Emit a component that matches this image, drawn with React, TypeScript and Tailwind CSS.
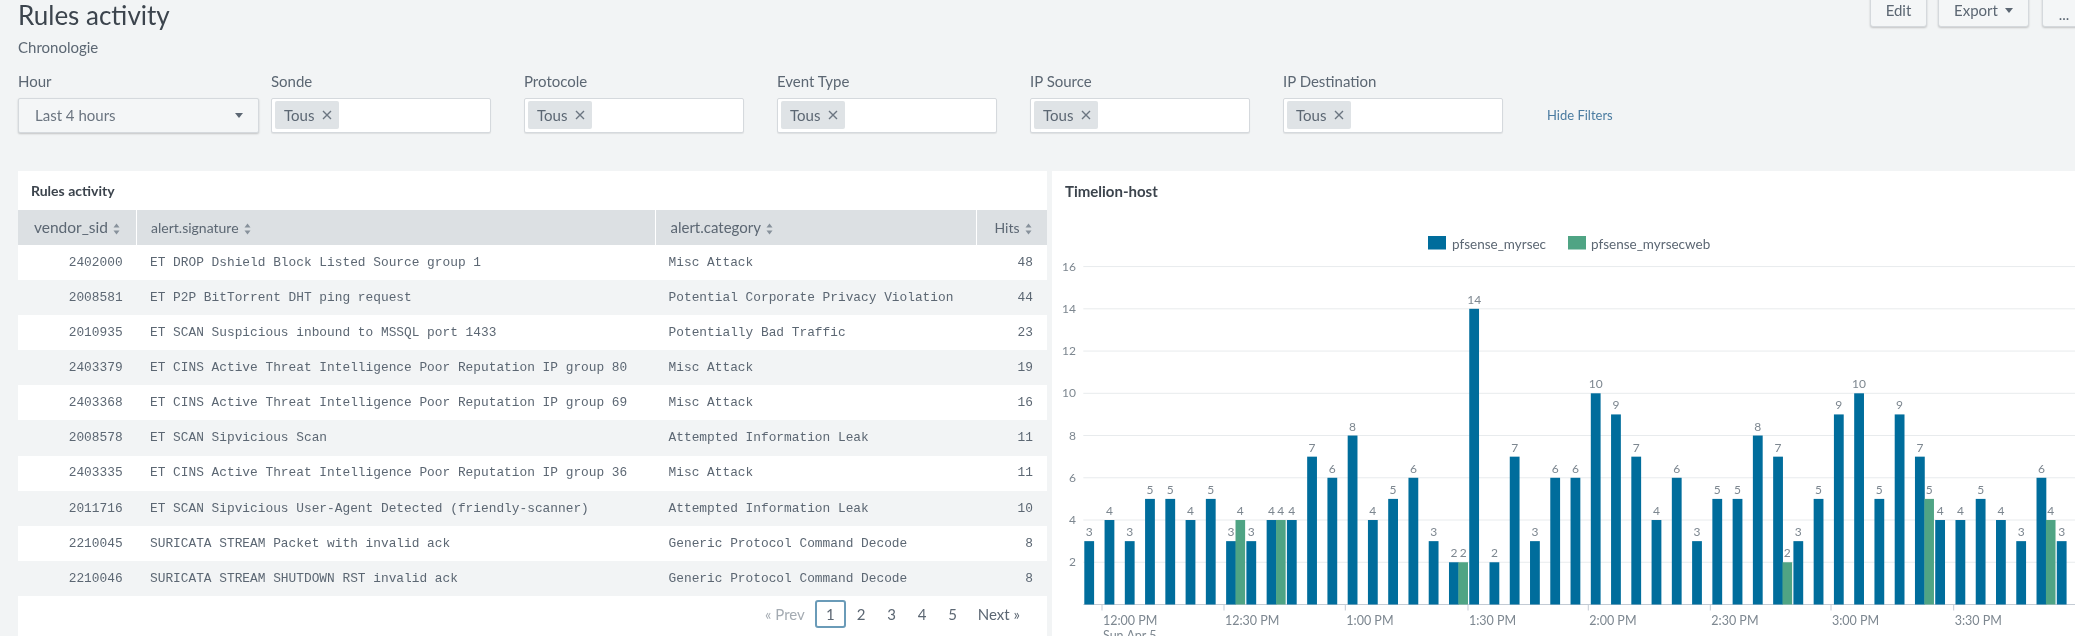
import React from "react";

const rows: [string, string, string, number][] = [
  ["2402000", "ET DROP Dshield Block Listed Source group 1", "Misc Attack", 48],
  ["2008581", "ET P2P BitTorrent DHT ping request", "Potential Corporate Privacy Violation", 44],
  ["2010935", "ET SCAN Suspicious inbound to MSSQL port 1433", "Potentially Bad Traffic", 23],
  ["2403379", "ET CINS Active Threat Intelligence Poor Reputation IP group 80", "Misc Attack", 19],
  ["2403368", "ET CINS Active Threat Intelligence Poor Reputation IP group 69", "Misc Attack", 16],
  ["2008578", "ET SCAN Sipvicious Scan", "Attempted Information Leak", 11],
  ["2403335", "ET CINS Active Threat Intelligence Poor Reputation IP group 36", "Misc Attack", 11],
  ["2011716", "ET SCAN Sipvicious User-Agent Detected (friendly-scanner)", "Attempted Information Leak", 10],
  ["2210045", "SURICATA STREAM Packet with invalid ack", "Generic Protocol Command Decode", 8],
  ["2210046", "SURICATA STREAM SHUTDOWN RST invalid ack", "Generic Protocol Command Decode", 8],
];

const blue = [3,4,3,5,5,4,5,3,3,4,4,7,6,8,4,5,6,3,2,14,2,7,3,6,6,10,9,7,4,6,3,5,5,8,7,3,5,9,10,5,9,7,4,4,5,4,3,6,3];
const green: Record<number, number> = { 7: 4, 9: 4, 18: 2, 34: 2, 41: 5, 47: 4 };
const X0 = 1084.3;
const STEP = 20.26;
const BASE = 604.5;
const UNIT = 21.12;
const ticks: [number, string][] = [
  [1102, "12:00 PM"], [1224, "12:30 PM"], [1345.3, "1:00 PM"], [1468, "1:30 PM"],
  [1588.3, "2:00 PM"], [1710.3, "2:30 PM"], [1831, "3:00 PM"], [1953.7, "3:30 PM"],
];

function SortIcon() {
  return (
    <svg width="7" height="12" viewBox="0 0 7 12" className="ml-[5px] inline-block">
      <path d="M3.5 0.5 L6.5 4.5 H0.5 Z M3.5 11.5 L0.5 7.5 H6.5 Z" fill="#87919b" />
    </svg>
  );
}

function MultiSelect({ label }: { label: string }) {
  return (
    <div className="w-[253px] shrink-0">
      <div className="h-[16px] text-[15px] leading-[16px] text-[#5c6773]">{label}</div>
      <div className="mt-[9px] flex h-[34.5px] w-[220px] items-center rounded-[2px] border border-[#d5d9dd] bg-white pl-[3px] shadow-[0_1px_1px_rgba(0,0,0,0.08)]">
        <span className="flex h-[28px] w-[64px] items-center justify-between rounded-[2px] bg-[#dfe3e6] pl-[9px] pr-[7px] text-[15px] text-[#5c6773]">
          Tous
          <svg width="10" height="10" viewBox="0 0 10 10">
            <path d="M1 1 L9 9 M9 1 L1 9" stroke="#6b7580" strokeWidth="1.4" />
          </svg>
        </span>
      </div>
    </div>
  );
}

function Btn({ w, children }: { w: string; children: React.ReactNode }) {
  return (
    <div className={`${w} flex h-[33px] items-center justify-center gap-[7px] rounded-[3px] border border-[#d5d9dd] bg-[#f4f6f7] text-[15px] text-[#5c6773] shadow-[0_1px_2px_rgba(0,0,0,0.2)]`}>
      {children}
    </div>
  );
}

export default function App() {
  return (
    <div className="h-[636px] w-[2075px] overflow-hidden bg-[#f2f4f5] pl-[18px] font-['Lato',sans-serif] blur-[0.4px]">
      <div className="flex h-[30px] items-start justify-between">
        <h1 className="text-[26px] leading-[30px] text-[#3c444d]">Rules activity</h1>
        <div className="-mr-[11px] -mt-[6px] flex gap-[11px]">
          <Btn w="w-[57px]">Edit</Btn>
          <Btn w="w-[91px]">
            Export
            <svg width="8" height="5" viewBox="0 0 8 5"><path d="M0 0 H8 L4 5 Z" fill="#5c6773" /></svg>
          </Btn>
          <div className="ml-[2px]">
            <Btn w="w-[44px]"><span className="pt-[8px]">...</span></Btn>
          </div>
        </div>
      </div>
      <div className="mt-[9px] h-[16px] text-[15px] leading-[16px] text-[#5c6773]">Chronologie</div>
      <div className="mt-[18px] flex">
        <div className="w-[253px] shrink-0">
          <div className="h-[16px] text-[15px] leading-[16px] text-[#5c6773]">Hour</div>
          <div className="mt-[9px] flex h-[34.5px] w-[241px] items-center justify-between rounded-[2px] border border-[#d5d9dd] bg-[#f4f6f7] pl-[16px] pr-[15px] text-[15px] text-[#6b7580] shadow-[0_1px_2px_rgba(0,0,0,0.2)]">
            Last 4 hours
            <svg width="8" height="5" viewBox="0 0 8 5"><path d="M0 0 H8 L4 5 Z" fill="#5c6773" /></svg>
          </div>
        </div>
        <MultiSelect label="Sonde" />
        <MultiSelect label="Protocole" />
        <MultiSelect label="Event Type" />
        <MultiSelect label="IP Source" />
        <MultiSelect label="IP Destination" />
        <div className="ml-[11px] mt-[34px] text-[13px] leading-[16px] text-[#4a7ba0]">Hide Filters</div>
      </div>

      <div className="mt-[38.5px] flex h-[465px] gap-[5px]">
        <div className="w-[1029px] shrink-0 bg-white">
          <div className="flex h-[39px] items-center pl-[13px] text-[14px] font-bold text-[#3c444d]">Rules activity</div>
          <table className="w-full table-fixed border-collapse">
            <colgroup>
              <col className="w-[118.6px]" />
              <col className="w-[519.4px]" />
              <col className="w-[321px]" />
              <col className="w-[70px]" />
            </colgroup>
            <thead>
              <tr className="h-[35px] bg-[#dce0e3] text-left text-[#5c6773]">
                <th className="whitespace-nowrap border-r border-white pl-[16px] text-[15.5px] font-normal">vendor_sid<SortIcon /></th>
                <th className="border-r border-white pl-[14px] text-[14px] font-normal">alert.signature<SortIcon /></th>
                <th className="border-r border-white pl-[14px] text-[15px] font-normal">alert.category<SortIcon /></th>
                <th className="pl-[17px] text-[14px] font-normal">Hits<SortIcon /></th>
              </tr>
            </thead>
            <tbody className="font-['Liberation_Mono',monospace] text-[12.83px] text-[#5c6773]">
              {rows.map((r, i) => (
                <tr key={r[0]} className={`h-[35.1px] ${i % 2 ? "bg-[#f2f4f5]" : "bg-white"}`}>
                  <td className="pr-[14px] text-right">{r[0]}</td>
                  <td className="whitespace-nowrap pl-[13.4px]">{r[1]}</td>
                  <td className="whitespace-nowrap pl-[12.6px]">{r[2]}</td>
                  <td className="pr-[14px] text-right">{r[3]}</td>
                </tr>
              ))}
            </tbody>
          </table>
          <div className="mt-[4px] flex h-[28px] items-center justify-end pr-[27px] text-[15px] text-[#5c6773]">
            <span className="mr-[10px] text-[#a4abb2]">« Prev</span>
            <span className="flex h-[28px] w-[31px] items-center justify-center rounded-[3px] border-2 border-[#6a9bb8]">1</span>
            <span className="w-[30.5px] text-center">2</span>
            <span className="w-[30.5px] text-center">3</span>
            <span className="w-[30.5px] text-center">4</span>
            <span className="w-[30.5px] text-center">5</span>
            <span className="ml-[10px]">Next »</span>
          </div>
        </div>
        <div className="min-w-0 flex-1 bg-white">
          <div className="flex h-[41px] items-center pl-[13px] text-[15px] font-bold text-[#3c444d]">Timelion-host</div>
          <svg width="1023" height="424" viewBox="1052 212 1023 424" className="block">
            <rect x="1428" y="236" width="18" height="13.5" fill="#006d9c" />
            <text x="1452" y="249" fontSize="13.5" fill="#5c6773">pfsense_myrsec</text>
            <rect x="1568" y="236" width="18" height="13.5" fill="#4fa484" />
            <text x="1591" y="249" fontSize="13.5" fill="#5c6773">pfsense_myrsecweb</text>
            {[2, 4, 6, 8, 10, 12, 14, 16].map((v) => (
              <g key={v}>
                <line x1="1083.3" x2="2075" y1={BASE - v * UNIT} y2={BASE - v * UNIT} stroke="#e8ebed" />
                <text x="1076" y={BASE - v * UNIT + 4} textAnchor="end" fontSize="12" fill="#7d8790">{v}</text>
              </g>
            ))}
            <line x1="1083.3" x2="2075" y1={BASE} y2={BASE} stroke="#c3cbd4" />
            {ticks.map(([x, l], i) => (
              <g key={l}>
                <line x1={x} x2={x} y1={BASE} y2={BASE + 6} stroke="#c3cbd4" />
                <text x={x + 1} y="625" fontSize="12.5" fill="#7d8790">{l}</text>
                {i === 0 && <text x={x + 1} y="640" fontSize="12.5" fill="#7d8790">Sun Apr 5</text>}
              </g>
            ))}
            {blue.map((v, i) => {
              const x = X0 + i * STEP;
              const g = green[i];
              return (
                <g key={i}>
                  <rect x={x} y={BASE - v * UNIT} width="9.8" height={v * UNIT} fill="#006d9c" />
                  <text x={x + 4.9} y={BASE - v * UNIT - 5} textAnchor="middle" fontSize="12" fill="#7d8790">{v}</text>
                  {g && <rect x={x + 9.4} y={BASE - g * UNIT} width="9.6" height={g * UNIT} fill="#4fa484" />}
                  {g && <text x={x + 14.2} y={BASE - g * UNIT - 5} textAnchor="middle" fontSize="12" fill="#7d8790">{g}</text>}
                </g>
              );
            })}
          </svg>
        </div>
      </div>
    </div>
  );
}
